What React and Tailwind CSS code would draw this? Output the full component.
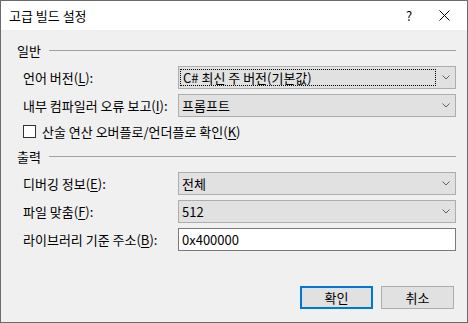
import React from "react";

const font = { fontFamily: '"Noto Sans CJK KR", "Noto Sans", sans-serif' };

function Chevron() {
  return (
    <svg width="8" height="5" viewBox="0 0 8 5" className="shrink-0">
      <path d="M0.5 0.5 L4 4 L7.5 0.5" fill="none" stroke="#606060" strokeWidth="1" />
    </svg>
  );
}

function Combo({ value, focused }) {
  return (
    <div className="flex h-[23px] w-[278px] shrink-0 items-center border border-[#adadad] bg-[#e1e1e1] pl-[1px] pr-[5px]">
      <div className="flex h-[17px] flex-1 items-center">
        <span
          className={
            "flex h-[17px] items-center pl-[2px] " +
            (focused ? "w-[256px] border border-dotted border-black pl-[1px]" : "")
          }
        >
          {value}
        </span>
      </div>
      <Chevron />
    </div>
  );
}

function Label({ children }) {
  return <div className="w-[177px] shrink-0 whitespace-nowrap pl-[22px]">{children}</div>;
}

function U({ children }) {
  return <span className="underline underline-offset-2">{children}</span>;
}

export default function App() {
  return (
    <div
      className="flex h-[323px] w-[468px] flex-col border border-[#6b6b6b] bg-[#f0f0f0] text-[13px] leading-none text-black"
      style={font}
    >
      <div className="flex h-[29px] shrink-0 items-center bg-white pl-[8px]">
        <span className="flex-1">고급 빌드 설정</span>
        <span className="w-[24px] text-center text-[13px]">?</span>
        <span className="flex w-[46px] items-center justify-center">
          <svg width="11" height="11" viewBox="0 0 11 11">
            <path d="M0.5 0.5 L10.5 10.5 M10.5 0.5 L0.5 10.5" stroke="#000" strokeWidth="1" />
          </svg>
        </span>
      </div>

      <div className="flex flex-1 flex-col">
        <div className="mt-[12px] flex h-[16px] items-center pl-[16px] pr-[11px]">
          <span>일반</span>
          <div className="ml-[8px] h-px flex-1 bg-[#a0a0a0]" />
        </div>
        <div className="mt-[8px] flex items-center">
          <Label>
            언어 버전(<U>L</U>):
          </Label>
          <Combo value="C# 최신 주 버전(기본값)" focused />
        </div>
        <div className="mt-[5px] flex items-center">
          <Label>
            내부 컴파일러 오류 보고(<U>I</U>):
          </Label>
          <Combo value="프롬프트" />
        </div>
        <div className="mt-[8px] flex h-[13px] items-center pl-[22px]">
          <div className="h-[13px] w-[13px] shrink-0 border border-[#333] bg-white" />
          <span className="ml-[6px] whitespace-nowrap">
            산술 연산 오버플로/언더플로 확인(<U>K</U>)
          </span>
        </div>

        <div className="mt-[10px] flex h-[16px] items-center pl-[16px] pr-[11px]">
          <span>출력</span>
          <div className="ml-[8px] h-px flex-1 bg-[#a0a0a0]" />
        </div>
        <div className="mt-[8px] flex items-center">
          <Label>
            디버깅 정보(<U>E</U>):
          </Label>
          <Combo value="전체" />
        </div>
        <div className="mt-[5px] flex items-center">
          <Label>
            파일 맞춤(<U>F</U>):
          </Label>
          <Combo value="512" />
        </div>
        <div className="mt-[5px] flex items-center">
          <Label>
            라이브러리 기준 주소(<U>B</U>):
          </Label>
          <div className="flex h-[23px] w-[278px] shrink-0 items-center border border-[#7a7a7a] bg-white pl-[3px]">
            0x400000
          </div>
        </div>

        <div className="mt-[35px] flex justify-end gap-[8px] pr-[13px]">
          <button className="flex h-[23px] w-[73px] items-center justify-center border-2 border-[#0078d7] bg-[#e1e1e1]">
            확인
          </button>
          <button className="flex h-[23px] w-[73px] items-center justify-center border border-[#adadad] bg-[#e1e1e1]">
            취소
          </button>
        </div>
      </div>
    </div>
  );
}
